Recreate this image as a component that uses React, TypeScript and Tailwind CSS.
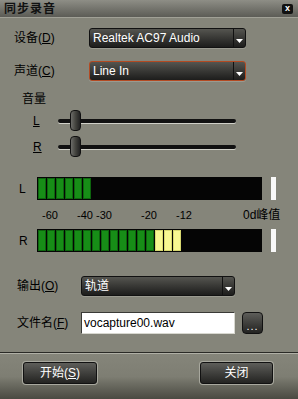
import React from "react";

const font = { fontFamily: '"Liberation Sans", "Noto Sans CJK SC", sans-serif' };

const Arrow = () => (
  <svg width="7" height="4" viewBox="0 0 7 4" className="mt-[6px]">
    <path d="M0 0 H7 L3.5 4 Z" fill="#ffffff" />
  </svg>
);

const Select = ({ text, className, focus }: { text: string; className: string; focus?: boolean }) => (
  <div
    className={`${className} flex h-[20px] rounded-[3px] border ${focus ? "border-[#b34a22]" : "border-[#111]"} bg-gradient-to-b from-[#555550] to-[#1d1d1c] shadow-[0_1px_0_#9a9a90]`}
  >
    <div className="flex-1 pl-[3px] text-[12px] leading-[18px] text-white">{text}</div>
    <div className="w-[12px] border-l border-[#111] flex justify-center items-center">
      <Arrow />
    </div>
  </div>
);

const Slider = ({ label }: { label: string }) => (
  <div className="flex h-[22px] items-center">
    <span className="ml-[33px] w-[25px] text-[12px] leading-none underline">{label}</span>
    <div className="relative w-[178px] h-[4px] rounded-full bg-[#111] shadow-[0_1px_0_#d0d0c8]">
      <div className="absolute left-[12px] top-[-9px] w-[11px] h-[21px] rounded-[4px] border border-[#111] bg-gradient-to-r from-[#6c6c68] via-[#44443f] to-[#222]" />
    </div>
  </div>
);

const Meter = ({ label, green, yellow }: { label: string; green: number; yellow: number }) => (
  <div className="flex h-[23px] items-center">
    <span className="ml-[19px] w-[18px] text-[12px]">{label}</span>
    <div className="w-[225px] h-[23px] bg-[#050505] flex items-stretch pl-[1px] py-[1px] gap-[1px]">
      {Array.from({ length: green }).map((_, i) => (
        <div key={"g" + i} className="w-[8px] bg-[#178d17] border border-[#0d650d]" />
      ))}
      {Array.from({ length: yellow }).map((_, i) => (
        <div key={"y" + i} className="w-[8px] bg-[#f7f792] border border-[#d8d870]" />
      ))}
    </div>
    <div className="ml-[9px] w-[5px] h-[23px] bg-[#f8f8f8]" />
  </div>
);

const Button = ({ children, className }: { children: React.ReactNode; className: string }) => (
  <div
    className={`${className} h-[22px] rounded-[3px] border border-[#111] bg-gradient-to-b from-[#5e5e5a] to-[#242422] shadow-[0_0_0_1px_#a8a89e] flex items-center justify-center text-[12px] text-white`}
  >
    {children}
  </div>
);

export default function App() {
  return (
    <div className="w-[298px] h-[399px] bg-[#85857a] text-black overflow-hidden flex flex-col" style={font}>
      <div className="h-[18px] flex items-center justify-between px-[4px] bg-gradient-to-b from-[#8e8e86] to-[#5c5c56] border-b border-[#a0a096]">
        <span className="text-[12px] font-bold text-[#111] tracking-[1px]">同步录音</span>
        <div className="w-[11px] h-[10px] mr-[1px] rounded-[2px] bg-[#111] flex items-center justify-center text-white text-[9px] font-bold leading-none">
          x
        </div>
      </div>

      <div className="mt-[10px] flex h-[20px] items-center">
        <span className="ml-[14px] w-[75px] text-[12px]">
          设备(<u>D</u>)
        </span>
        <Select text="Realtek AC97 Audio" className="w-[157px]" />
      </div>

      <div className="mt-[13px] flex h-[20px] items-center">
        <span className="ml-[14px] w-[75px] text-[12px]">
          声道(<u>C</u>)
        </span>
        <Select text="Line In" className="w-[157px]" focus />
      </div>

      <div className="mt-[11px] h-[14px] ml-[22px] text-[12px] leading-[14px]">音量</div>

      <div className="mt-[4px]">
        <Slider label="L" />
      </div>
      <div className="mt-[4px]">
        <Slider label="R" />
      </div>

      <div className="mt-[19px]">
        <Meter label="L" green={6} yellow={0} />
      </div>

      <div className="mt-[8px] h-[14px] relative text-[11px] leading-[14px]">
        <span className="absolute left-[42px]">-60</span>
        <span className="absolute left-[77px]">-40</span>
        <span className="absolute left-[96px]">-30</span>
        <span className="absolute left-[141px]">-20</span>
        <span className="absolute left-[176px]">-12</span>
        <span className="absolute left-[243px] text-[12px]">0d峰值</span>
      </div>

      <div className="mt-[7px]">
        <Meter label="R" green={13} yellow={3} />
      </div>

      <div className="mt-[24px] flex h-[20px] items-center">
        <span className="ml-[17px] w-[64px] text-[12px]">
          输出(<u>O</u>)
        </span>
        <Select text="轨道" className="w-[154px]" />
      </div>

      <div className="mt-[16px] flex h-[22px] items-center">
        <span className="ml-[17px] w-[64px] text-[12px]">
          文件名(<u>F</u>)
        </span>
        <div className="w-[154px] h-[22px] bg-white border border-t-[#3a3a36] border-l-[#3a3a36] border-b-[#d8d8d0] border-r-[#d8d8d0] pl-[2px] text-[12px] leading-[20px]">
          vocapture00.wav
        </div>
        <div className="ml-[7px] w-[21px] h-[22px] rounded-[4px] border border-[#111] bg-gradient-to-b from-[#5e5e5a] to-[#242422] flex items-end justify-center text-white text-[11px] leading-[14px] tracking-[1px]">
          ...
        </div>
      </div>

      <div className="mt-[18px] h-[2px] border-t border-[#2a2a26] border-b border-b-[#b0b0a6]" />

      <div className="flex-1 flex flex-col bg-gradient-to-b from-[#85857a] via-[#7e7e73] to-[#4a4a42]">
        <div className="mt-[8px] flex justify-between">
          <Button className="ml-[23px] w-[74px]">
            开始(<u>S</u>)
          </Button>
          <Button className="mr-[25px] w-[73px]">关闭</Button>
        </div>
      </div>
    </div>
  );
}
